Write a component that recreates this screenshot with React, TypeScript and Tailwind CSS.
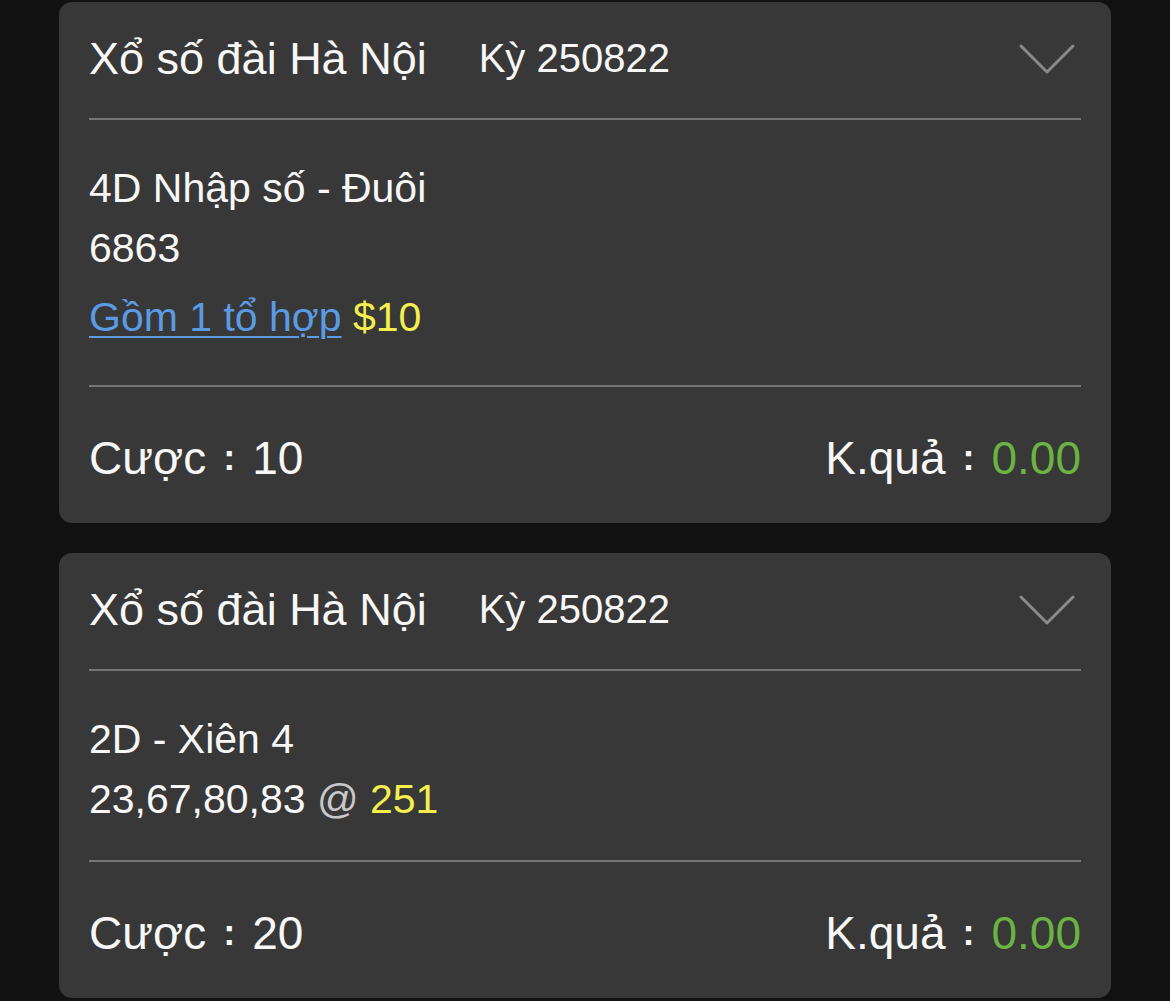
import React from 'react'

const font = { fontFamily: '"Liberation Sans", Arial, sans-serif' }

interface betInterface {
    title: string,
    period: string,
    lines: React.ReactNode[],
    stake: string,
    result: string,
}

const Chevron = () => (
    <svg width="56" height="32" viewBox="0 0 56 32" className="ml-auto mr-[6px] mt-[2px]">
        <polyline points="2,3 28,29 54,3" fill="none" stroke="#8a8a8a" strokeWidth="3" strokeLinecap="round" strokeLinejoin="round" />
    </svg>
)

const Colon = () => (
    <span className="inline-block w-[46px] text-center text-[36px] font-bold relative -top-[4px]">:</span>
)

const BetCard: React.FC<betInterface> = ({ title, period, lines, stake, result }) => {
    return (
        <div className="bg-[#383838] rounded-[13px] px-[30px] text-[#f7f7f7]">
            <div className="h-[116px] flex items-center pb-[4px]">
                <span className="text-[45px] leading-none">{title}</span>
                <span className="text-[40px] leading-none ml-[52px]">{period}</span>
                <Chevron />
            </div>
            <div className="h-[2px] bg-[#767676]" />
            <div className="pt-[38px] pb-[31px]">
                {lines}
            </div>
            <div className="h-[2px] bg-[#767676]" />
            <div className="h-[136px] flex items-center justify-between pt-[6px] text-[46px] leading-none">
                <span>Cược<Colon />{stake}</span>
                <span>K.quả<Colon /><span className="text-[#6cb344]">{result}</span></span>
            </div>
        </div>
    )
}

export default function App() {
    return (
        <div style={font} className="min-h-screen bg-[#111111] px-[59px] pt-[2px] pb-[10px] flex flex-col gap-[30px]">
            <BetCard
                title="Xổ số đài Hà Nội"
                period="Kỳ 250822"
                stake="10"
                result="0.00"
                lines={[
                    <div key="a" className="text-[41px] leading-[60px]">4D Nhập số - Đuôi</div>,
                    <div key="b" className="text-[41px] leading-[60px]">6863</div>,
                    <div key="c" className="text-[41px] leading-[74px] mt-[2px]">
                        <span className="text-[#5b9be3] underline underline-offset-[5px] decoration-[2px]">Gồm 1 tổ hợp</span>{' '}
                        <span className="text-[#f4ef4f]">$10</span>
                    </div>,
                ]}
            />
            <BetCard
                title="Xổ số đài Hà Nội"
                period="Kỳ 250822"
                stake="20"
                result="0.00"
                lines={[
                    <div key="a" className="text-[41px] leading-[60px]">2D - Xiên 4</div>,
                    <div key="b" className="text-[41px] leading-[60px]">
                        23,67,80,83 <span className="text-[#c9c9c9]">@</span> <span className="text-[#f4ef4f]">251</span>
                    </div>,
                ]}
            />
        </div>
    )
}
